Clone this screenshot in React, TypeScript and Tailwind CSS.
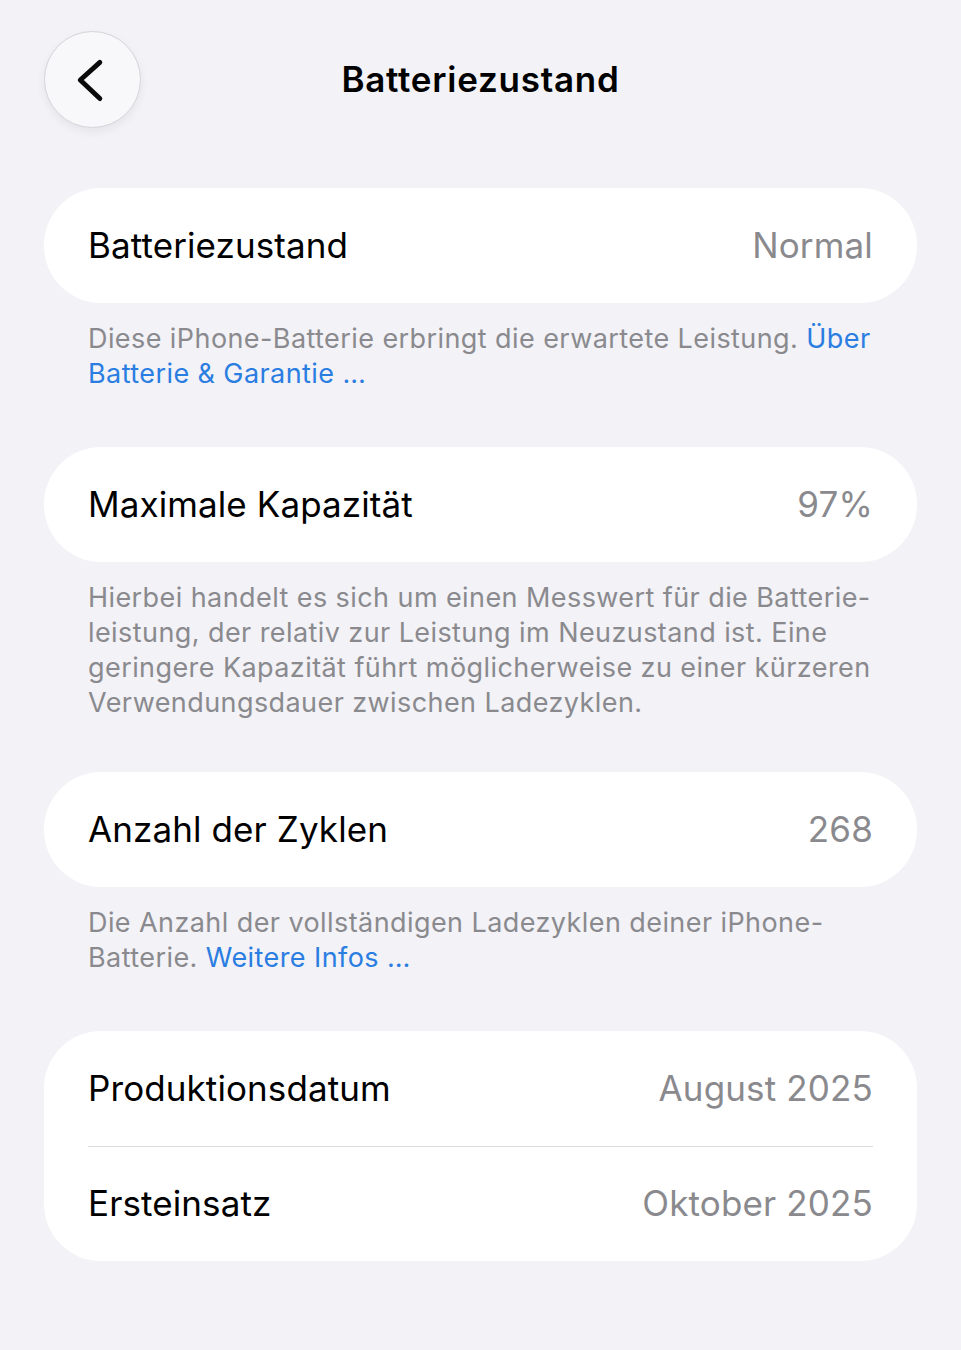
import React from "react";

const font = { fontFamily: "Inter, 'Noto Sans', sans-serif" };

function Row({ label, value }: { label: string; value: string }) {
  return (
    <div className="flex h-[115px] items-center justify-between pl-[44px] pr-[44px]">
      <span className="text-[35px] tracking-[0.1px] text-black">{label}</span>
      <span className="text-[35px] tracking-[0.15px] text-[#8a8a8e]">{value}</span>
    </div>
  );
}

function Note({ children }: { children: React.ReactNode }) {
  return (
    <div className="mt-[18px] pl-[44px] pr-[45px] text-[27px] leading-[35px] tracking-[0.42px] text-[#8a8a8e]">
      {children}
    </div>
  );
}

const link = "text-[#2a7de1]";

export default function App() {
  return (
    <div className="min-h-[1350px] w-full bg-[#f2f2f7] px-[44px] pt-[31px]" style={font}>
      <div className="grid grid-cols-[97px_1fr_97px] items-center">
        <div className="flex h-[97px] w-[97px] items-center justify-center rounded-full border border-[#d6d6da] bg-[#f8f8fa] shadow-[0_4px_10px_rgba(0,0,0,0.06)]">
          <svg width="97" height="97" viewBox="0 0 97 97" fill="none">
            <path d="M56 31 L36 49 L56 68" stroke="#0a0a0a" strokeWidth="5" strokeLinecap="round" strokeLinejoin="round" />
          </svg>
        </div>
        <div className="text-center text-[35px] font-semibold tracking-[0.75px] text-black">Batteriezustand</div>
        <div />
      </div>

      <div className="mt-[60px] rounded-[57px] bg-white">
        <Row label="Batteriezustand" value="Normal" />
      </div>
      <Note>
        <div className="whitespace-nowrap">
          Diese iPhone-Batterie erbringt die erwartete Leistung. <span className={link}>Über</span>
        </div>
        <div className={`whitespace-nowrap ${link}`}>Batterie &amp; Garantie …</div>
      </Note>

      <div className="mt-[56px] rounded-[57px] bg-white">
        <Row label="Maximale Kapazität" value="97%" />
      </div>
      <Note>
        <div className="whitespace-nowrap">Hierbei handelt es sich um einen Messwert für die Batterie-</div>
        <div className="whitespace-nowrap">leistung, der relativ zur Leistung im Neuzustand ist. Eine</div>
        <div className="whitespace-nowrap">geringere Kapazität führt möglicherweise zu einer kürzeren</div>
        <div className="whitespace-nowrap">Verwendungsdauer zwischen Ladezyklen.</div>
      </Note>

      <div className="mt-[52px] rounded-[57px] bg-white">
        <Row label="Anzahl der Zyklen" value="268" />
      </div>
      <Note>
        <div className="whitespace-nowrap">Die Anzahl der vollständigen Ladezyklen deiner iPhone-</div>
        <div className="whitespace-nowrap">
          Batterie. <span className={link}>Weitere Infos …</span>
        </div>
      </Note>

      <div className="mt-[56px] rounded-[57px] bg-white">
        <Row label="Produktionsdatum" value="August 2025" />
        <div className="mx-[44px] h-px bg-[#dcdce0]" />
        <div className="-mt-px">
          <Row label="Ersteinsatz" value="Oktober 2025" />
        </div>
      </div>
    </div>
  );
}
